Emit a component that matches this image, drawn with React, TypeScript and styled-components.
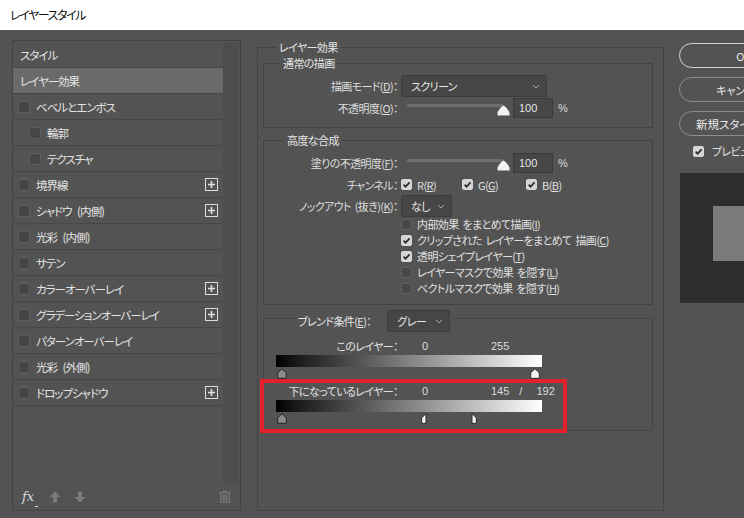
import React from 'react';
import styled, { createGlobalStyle } from 'styled-components';

const Global = createGlobalStyle`
  html, body { margin: 0; padding: 0; background: #535353; }
  #root { width: 744px; height: 518px; overflow: hidden; }
  u { text-decoration: underline; text-underline-offset: 1px; }
`;

const FONT = `"Noto Sans CJK JP", "Noto Sans", sans-serif`;

const Window = styled.div`
  width: 744px;
  height: 518px;
  display: flex;
  flex-direction: column;
  overflow: hidden;
  font-family: ${FONT};
  font-size: 11px;
  font-feature-settings: "palt";
  letter-spacing: -0.6px;
  word-spacing: 2px;
  color: #e0e0e0;
  line-height: 14px;
`;

const TitleBar = styled.div`
  flex: none;
  height: 30px;
  background: #ffffff;
  color: #111;
  display: flex;
  align-items: center;
  padding-left: 10px;
  font-size: 12px;
  letter-spacing: -1.4px;
`;

const Body = styled.div`
  flex: 1;
  min-height: 0;
  background: #535353;
  display: flex;
  align-items: flex-start;
  padding: 10px 0 0 12px;
  gap: 16px;
`;

/* ---------- left panel ---------- */
const StylePanel = styled.div`
  flex: none;
  width: 229px;
  height: 471px;
  box-sizing: border-box;
  border: 1px solid #434343;
  display: flex;
  flex-direction: column;
`;

const PanelTop = styled.div`
  flex: 1;
  display: flex;
  min-height: 0;
  padding-top: 1px;
`;

const List = styled.div`
  width: 210px;
  display: flex;
  flex-direction: column;
`;

const ScrollTrack = styled.div`
  width: 16px;
  background: #4d4d4d;
`;

const ListRow = styled.div<{ $indent: number; $active?: boolean }>`
  height: 25px;
  border-bottom: 1px solid #474747;
  display: flex;
  align-items: center;
  gap: 6px;
  padding: 0 5px 0 ${(p) => p.$indent}px;
  background: ${(p) => (p.$active ? '#6a6a6a' : 'transparent')};
  color: #e4e4e4;
  font-size: 11.5px;
  letter-spacing: -1px;
  word-spacing: 4px;
`;

const AddButton = styled.span`
  margin-left: auto;
  width: 11px;
  height: 11px;
  border: 1.5px solid #dcdcdc;
  display: flex;
  align-items: center;
  justify-content: center;
`;

const Toolbar = styled.div`
  flex: none;
  height: 27px;
  display: flex;
  align-items: center;
  padding: 0 9px 0 9px;
  gap: 13px;
`;

const FxLabel = styled.span`
  font-family: "DejaVu Serif", serif;
  font-style: italic;
  font-size: 13px;
  letter-spacing: 0;
  color: #d8d8d8;
  position: relative;
  width: 14px;
  &::after {
    content: '';
    position: absolute;
    right: -2px;
    bottom: -3px;
    width: 3px;
    height: 1px;
    background: #d8d8d8;
  }
`;

const TrashSlot = styled.span`
  margin-left: auto;
  display: flex;
`;

/* ---------- middle ---------- */
const Group = styled.div<{ $pad: string; $mt: number }>`
  border: 1px solid #434343;
  display: flex;
  flex-direction: column;
  padding: ${(p) => p.$pad};
  margin-top: ${(p) => p.$mt}px;
  min-width: 0;
`;

const EffectsGroup = styled(Group)`
  flex: none;
  width: 407px;
  height: 464px;
  box-sizing: border-box;
`;

const Caption = styled.div<{ $ml: number; $mt?: number; $gap?: number }>`
  align-self: flex-start;
  margin-top: ${(p) => p.$mt ?? -8}px;
  margin-left: ${(p) => p.$ml}px;
  padding: 0 3px;
  background: #535353;
  line-height: 14px;
  color: #e4e4e4;
  display: flex;
  align-items: center;
  gap: ${(p) => p.$gap ?? 0}px;
`;

const FormRow = styled.div<{ $h: number; $mt?: number }>`
  display: grid;
  grid-template-columns: 134px 1fr;
  column-gap: 3px;
  align-items: center;
  height: ${(p) => p.$h}px;
  margin-top: ${(p) => p.$mt ?? 0}px;
`;

const Label = styled.span`
  text-align: right;
  white-space: nowrap;
  color: #dedede;
`;

const Controls = styled.div`
  display: flex;
  align-items: center;
  min-width: 0;
`;

const Select = styled.div<{ $w: number }>`
  width: ${(p) => p.$w}px;
  height: 22px;
  box-sizing: border-box;
  background: #464646;
  border: 1px solid #3c3c3c;
  border-radius: 2px;
  display: flex;
  align-items: center;
  justify-content: space-between;
  padding: 0 6px 0 9px;
  color: #e8e8e8;
`;

const SliderTrack = styled.div`
  margin-left: 6px;
  width: 96px;
  height: 3px;
  background: #6e6e6e;
  border-radius: 1px;
  position: relative;
  align-self: center;
  margin-top: -6px;
`;

const SliderThumb = styled.span`
  position: absolute;
  right: -7px;
  top: 1px;
  display: flex;
`;

const NumberBox = styled.div`
  margin-left: 10px;
  width: 40px;
  height: 20px;
  box-sizing: border-box;
  background: #474747;
  border: 1px solid #3b3b3b;
  display: flex;
  align-items: center;
  padding-left: 5px;
  font-family: "Liberation Sans", sans-serif;
  font-size: 11px;
  letter-spacing: 0;
  color: #e6e6e6;
`;

const Unit = styled.span`
  margin-left: 5px;
  font-family: "Liberation Sans", sans-serif;
  letter-spacing: 0;
  color: #dcdcdc;
`;

const ChannelItem = styled.span<{ $w: number }>`
  width: ${(p) => p.$w}px;
  display: flex;
  align-items: center;
  gap: 5px;
`;

const CheckList = styled.div`
  display: flex;
  flex-direction: column;
  padding-left: 137px;
`;

const CheckLine = styled.div`
  height: 16px;
  display: flex;
  align-items: center;
  gap: 5px;
  white-space: nowrap;
`;

const Box = styled.span<{ $checked?: boolean }>`
  flex: none;
  width: 11px;
  height: 11px;
  box-sizing: border-box;
  border-radius: 2px;
  background: ${(p) => (p.$checked ? '#d6d6d6' : '#484848')};
  border: 1px solid ${(p) => (p.$checked ? '#d6d6d6' : '#626262')};
  display: flex;
  align-items: center;
  justify-content: center;
`;

const ListBox = styled(Box)`
  width: 12px;
  height: 12px;
  background: #464646;
  border-color: #5e5e5e;
  border-radius: 3px;
`;

const ValueRow = styled.div<{ $mt: number }>`
  display: flex;
  align-items: center;
  height: 14px;
  margin-top: ${(p) => p.$mt}px;
`;

const ValueLabel = styled.span`
  width: 134px;
  text-align: right;
  white-space: nowrap;
`;

const Num = styled.span<{ $ml: number; $w?: number }>`
  margin-left: ${(p) => p.$ml}px;
  width: ${(p) => (p.$w ? `${p.$w}px` : 'auto')};
  font-family: "Liberation Sans", sans-serif;
  font-size: 11px;
  letter-spacing: 0;
  color: #dcdcdc;
`;

const GradientBar = styled.div<{ $mt: number }>`
  margin: ${(p) => p.$mt}px 0 0 12px;
  width: 266px;
  height: 12px;
  background: linear-gradient(to right, #000 0%, #1a1a1a 8%, #ffffff 100%);
`;

const ThumbRail = styled.div`
  position: relative;
  margin-left: 18px;
  width: 253px;
  height: 11px;
  margin-top: 1px;
`;

const ThumbAt = styled.span`
  position: absolute;
  top: 0;
  display: flex;
`;

const Highlight = styled.div`
  position: relative;
  display: flex;
  flex-direction: column;
  padding-top: 5px;
  height: 51px;
  box-sizing: border-box;
  &::after {
    content: '';
    position: absolute;
    left: -4px;
    right: 85px;
    top: 0;
    bottom: -3px;
    border: 4px solid #e4202a;
    pointer-events: none;
  }
`;

/* ---------- right column ---------- */
const Side = styled.div`
  flex: none;
  width: 130px;
  display: flex;
  flex-direction: column;
  gap: 9px;
  padding-top: 3px;
  margin-left: -1px;
`;

const PillButton = styled.div<{ $primary?: boolean; $size?: number; $shift?: number }>`
  height: 25px;
  box-sizing: border-box;
  border-radius: 13px;
  border: ${(p) => (p.$primary ? '1.5px solid #d4d4d4' : '1px solid #8c8c8c')};
  display: flex;
  align-items: center;
  justify-content: center;
  padding-right: ${(p) => p.$shift ?? 0}px;
  color: #e8e8e8;
  font-size: ${(p) => p.$size ?? 11}px;
  letter-spacing: 0;
  white-space: nowrap;
`;

const PreviewToggle = styled.div`
  display: flex;
  align-items: center;
  gap: 8px;
  padding-left: 14px;
  margin-top: -1px;
  height: 14px;
`;

const PreviewBox = styled.div`
  margin-top: 6px;
  margin-left: 1px;
  width: 121px;
  height: 130px;
  background: #2d2d2d;
  padding: 33px 0 0 33px;
  box-sizing: border-box;
`;

const PreviewSwatch = styled.div`
  width: 60px;
  height: 55px;
  background: #7a7a7a;
`;

/* ---------- drawings ---------- */
const CheckMark = () => (
  <svg width="9" height="9" viewBox="0 0 9 9">
    <path d="M1.6 4.6 L3.6 6.6 L7.6 2.4" stroke="#2e2e2e" strokeWidth="1.8" fill="none" />
  </svg>
);

const Check = ({ checked }: { checked?: boolean }) => <Box $checked={checked}>{checked && <CheckMark />}</Box>;

const Chevron = () => (
  <svg width="8" height="5" viewBox="0 0 8 5">
    <path d="M1 1 L4 4 L7 1" stroke="#a8a8a8" strokeWidth="1" fill="none" />
  </svg>
);

const Plus = () => (
  <svg width="9" height="9" viewBox="0 0 9 9">
    <path d="M4.5 1 V8 M1 4.5 H8" stroke="#e2e2e2" strokeWidth="1.6" />
  </svg>
);

type ThumbKind = 'dark' | 'light' | 'left' | 'right';
const Thumb = ({ kind }: { kind: ThumbKind }) => {
  const full = 'M5 0.8 L9.3 4.8 L9.3 10.3 L0.7 10.3 L0.7 4.8 Z';
  const leftHalf = 'M5 0.8 L5 10.3 L0.7 10.3 L0.7 4.8 Z';
  const rightHalf = 'M5 0.8 L9.3 4.8 L9.3 10.3 L5 10.3 Z';
  const d = kind === 'left' ? leftHalf : kind === 'right' ? rightHalf : full;
  const fill = kind === 'dark' ? '#8a8a8a' : '#f4f4f4';
  return (
    <svg width="10" height="11" viewBox="0 0 10 11">
      <path d={d} fill={fill} stroke="#1e1e1e" strokeWidth="0.9" strokeLinejoin="round" />
    </svg>
  );
};

const OpacityThumb = () => (
  <svg width="13" height="11" viewBox="0 0 13 11">
    <path d="M6.5 0.5 C7.5 0.5 12.5 6 12.5 8 L12.5 10.5 L0.5 10.5 L0.5 8 C0.5 6 5.5 0.5 6.5 0.5 Z" fill="#f2f2f2" />
  </svg>
);

const ArrowUp = () => (
  <svg width="12" height="12" viewBox="0 0 12 12">
    <path d="M6 0.5 L11.5 6 L8 6 L8 11.5 L4 11.5 L4 6 L0.5 6 Z" fill="#7b7b7b" />
  </svg>
);

const ArrowDown = () => (
  <svg width="12" height="12" viewBox="0 0 12 12">
    <path d="M6 11.5 L11.5 6 L8 6 L8 0.5 L4 0.5 L4 6 L0.5 6 Z" fill="#7b7b7b" />
  </svg>
);

const Trash = () => (
  <svg width="12" height="13" viewBox="0 0 12 13">
    <path d="M4 1.5 H8 M0.5 2.8 H11.5 M1.8 2.8 V12.3 H10.2 V2.8 M4.2 4.5 V10.8 M6 4.5 V10.8 M7.8 4.5 V10.8" stroke="#7d7d7d" strokeWidth="1.1" fill="none" />
  </svg>
);

/* ---------- data ---------- */
type Item = { label: string; kind: 'head' | 'item' | 'sub'; active?: boolean; add?: boolean };
const items: Item[] = [
  { label: 'スタイル', kind: 'head' },
  { label: 'レイヤー効果', kind: 'head', active: true },
  { label: 'ベベルとエンボス', kind: 'item' },
  { label: '輪郭', kind: 'sub' },
  { label: 'テクスチャ', kind: 'sub' },
  { label: '境界線', kind: 'item', add: true },
  { label: 'シャドウ (内側)', kind: 'item', add: true },
  { label: '光彩 (内側)', kind: 'item' },
  { label: 'サテン', kind: 'item' },
  { label: 'カラーオーバーレイ', kind: 'item', add: true },
  { label: 'グラデーションオーバーレイ', kind: 'item', add: true },
  { label: 'パターンオーバーレイ', kind: 'item' },
  { label: '光彩 (外側)', kind: 'item' },
  { label: 'ドロップシャドウ', kind: 'item', add: true },
];

const pos = (v: number) => Math.round((v / 255) * 253) - 5;

export default function App() {
  return (
    <>
      <Global />
      <Window>
        <TitleBar>レイヤースタイル</TitleBar>
        <Body>
          <StylePanel>
            <PanelTop>
              <List>
                {items.map((it) => (
                  <ListRow key={it.label} $indent={it.kind === 'head' ? 7 : it.kind === 'sub' ? 16 : 5} $active={it.active}>
                    {it.kind !== 'head' && <ListBox />}
                    <span>{it.label}</span>
                    {it.add && (
                      <AddButton>
                        <Plus />
                      </AddButton>
                    )}
                  </ListRow>
                ))}
              </List>
              <ScrollTrack />
            </PanelTop>
            <Toolbar>
              <FxLabel>fx</FxLabel>
              <ArrowUp />
              <ArrowDown />
              <TrashSlot>
                <Trash />
              </TrashSlot>
            </Toolbar>
          </StylePanel>

          <EffectsGroup $pad="0 10px 0 5px" $mt={7}>
            <Caption $ml={13}>レイヤー効果</Caption>

            <Group $pad="0 0 9px 0" $mt={9}>
              <Caption $ml={16}>通常の描画</Caption>
              <FormRow $h={22} $mt={5}>
                <Label>
                  描画モード(<u>D</u>)：
                </Label>
                <Controls>
                  <Select $w={146}>
                    <span>スクリーン</span>
                    <Chevron />
                  </Select>
                </Controls>
              </FormRow>
              <FormRow $h={20} $mt={1}>
                <Label>
                  不透明度(<u>O</u>)：
                </Label>
                <Controls>
                  <SliderTrack>
                    <SliderThumb>
                      <OpacityThumb />
                    </SliderThumb>
                  </SliderTrack>
                  <NumberBox>100</NumberBox>
                  <Unit>%</Unit>
                </Controls>
              </FormRow>
            </Group>

            <Group $pad="0 0 8px 0" $mt={12}>
              <Caption $ml={20}>高度な合成</Caption>
              <FormRow $h={20} $mt={6}>
                <Label>
                  塗りの不透明度(<u>F</u>)：
                </Label>
                <Controls>
                  <SliderTrack>
                    <SliderThumb>
                      <OpacityThumb />
                    </SliderThumb>
                  </SliderTrack>
                  <NumberBox>100</NumberBox>
                  <Unit>%</Unit>
                </Controls>
              </FormRow>
              <FormRow $h={21} $mt={1}>
                <Label>チャンネル：</Label>
                <Controls>
                  <ChannelItem $w={61}>
                    <Check checked />
                    <span>
                      R(<u>R</u>)
                    </span>
                  </ChannelItem>
                  <ChannelItem $w={64}>
                    <Check checked />
                    <span>
                      G(<u>G</u>)
                    </span>
                  </ChannelItem>
                  <ChannelItem $w={60}>
                    <Check checked />
                    <span>
                      B(<u>B</u>)
                    </span>
                  </ChannelItem>
                </Controls>
              </FormRow>
              <FormRow $h={21}>
                <Label>
                  ノックアウト (抜き)(<u>K</u>)：
                </Label>
                <Controls>
                  <Select $w={51}>
                    <span>なし</span>
                    <Chevron />
                  </Select>
                </Controls>
              </FormRow>
              <CheckList>
                <CheckLine>
                  <Check />
                  <span>
                    内部効果 をまとめて描画(<u>I</u>)
                  </span>
                </CheckLine>
                <CheckLine>
                  <Check checked />
                  <span>
                    クリップされた レイヤーをまとめて 描画(<u>C</u>)
                  </span>
                </CheckLine>
                <CheckLine>
                  <Check checked />
                  <span>
                    透明シェイプレイヤー(<u>T</u>)
                  </span>
                </CheckLine>
                <CheckLine>
                  <Check />
                  <span>
                    レイヤーマスクで効果 を隠す(<u>L</u>)
                  </span>
                </CheckLine>
                <CheckLine>
                  <Check />
                  <span>
                    ベクトルマスクで効果 を隠す(<u>H</u>)
                  </span>
                </CheckLine>
              </CheckList>
            </Group>

            <Group $pad="0 0 0 0" $mt={13}>
              <Caption $ml={31} $mt={-9} $gap={16}>
                <span>
                  ブレンド条件(<u>E</u>)：
                </span>
                <Select $w={63}>
                  <span>グレー</span>
                  <Chevron />
                </Select>
              </Caption>
              <ValueRow $mt={7}>
                <ValueLabel>このレイヤー：</ValueLabel>
                <Num $ml={24} $w={69}>
                  0
                </Num>
                <Num $ml={0}>255</Num>
              </ValueRow>
              <GradientBar $mt={2} />
              <ThumbRail>
                <ThumbAt style={{ left: pos(0) }}>
                  <Thumb kind="dark" />
                </ThumbAt>
                <ThumbAt style={{ left: pos(255) }}>
                  <Thumb kind="light" />
                </ThumbAt>
              </ThumbRail>
              <Highlight>
                <ValueRow $mt={0}>
                  <ValueLabel>下になっているレイヤー：</ValueLabel>
                  <Num $ml={24} $w={69}>
                    0
                  </Num>
                  <Num $ml={0}>145</Num>
                  <Num $ml={10}>/</Num>
                  <Num $ml={14}>192</Num>
                </ValueRow>
                <GradientBar $mt={2} />
                <ThumbRail>
                  <ThumbAt style={{ left: pos(0) }}>
                    <Thumb kind="dark" />
                  </ThumbAt>
                  <ThumbAt style={{ left: pos(145) }}>
                    <Thumb kind="left" />
                  </ThumbAt>
                  <ThumbAt style={{ left: pos(192) }}>
                    <Thumb kind="right" />
                  </ThumbAt>
                </ThumbRail>
              </Highlight>
            </Group>
          </EffectsGroup>

          <Side>
            <PillButton $primary>OK</PillButton>
            <PillButton $shift={6}>キャンセル</PillButton>
            <PillButton $size={11.5} $shift={22}>
              新規スタイル...
            </PillButton>
            <PreviewToggle>
              <Check checked />
              <span>プレビュー</span>
            </PreviewToggle>
            <PreviewBox>
              <PreviewSwatch />
            </PreviewBox>
          </Side>
        </Body>
      </Window>
    </>
  );
}
